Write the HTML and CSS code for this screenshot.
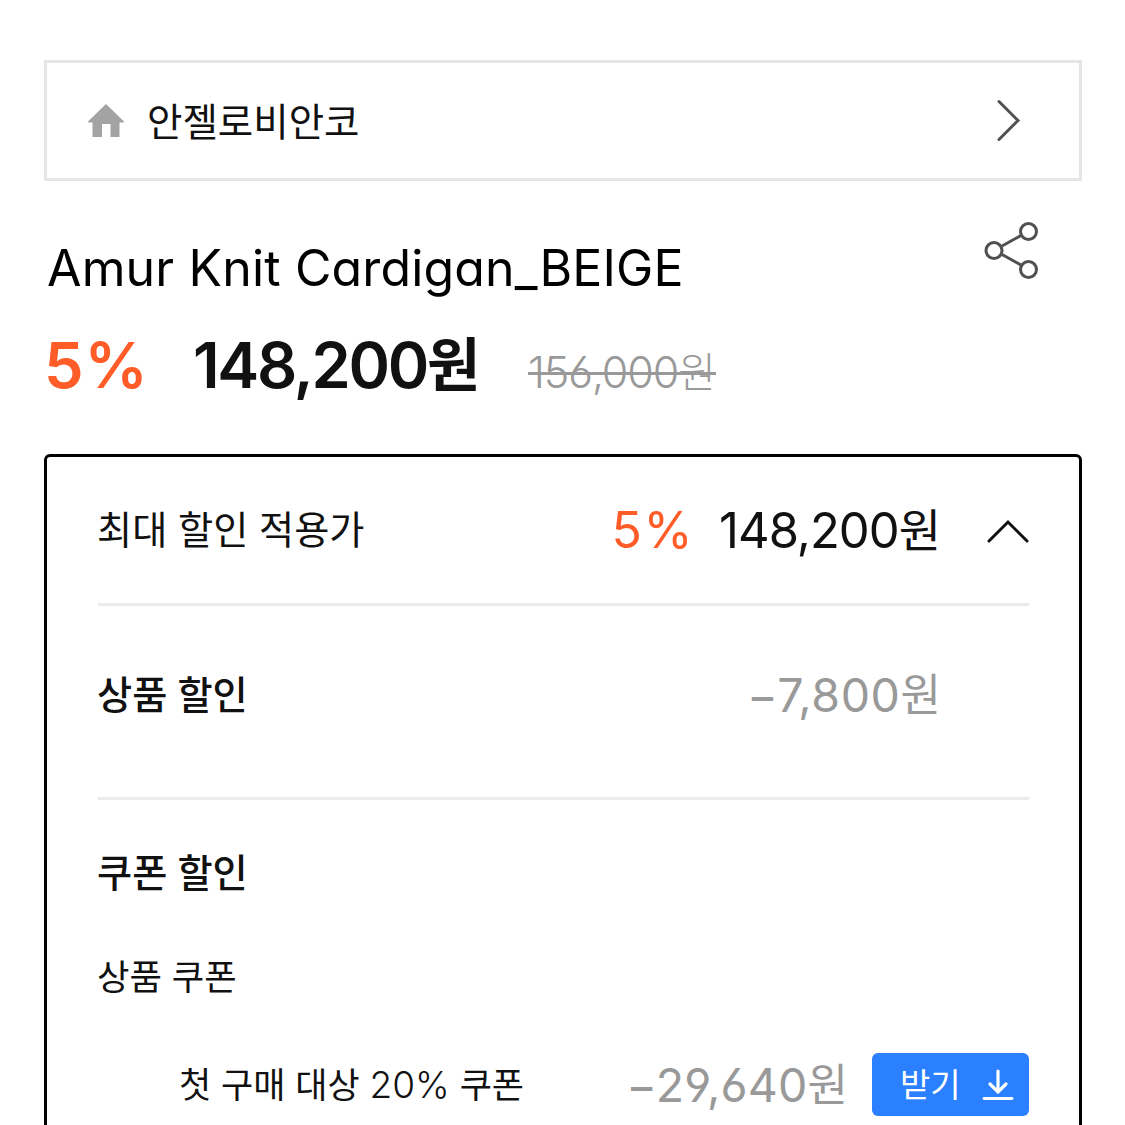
FILE: index.html
```html
<!DOCTYPE html>
<html lang="ko">
    <head>
        <meta charset="utf-8">
        <title>Amur Knit Cardigan_BEIGE</title>
        <link rel="stylesheet" href="styles.css">
    </head>
    <body>
        <a class="brand">
            <svg class="home" width="36" height="34" viewBox="0 0 36 34">
                <path d="M18 0L36 17.500L35.500 18.500H31.500V33H22.500V20H14V33H4.500V18.500H.5L0 17.500Z" fill="#a3a3a3"/>
            </svg>
            <span class="brand_name">안젤로비안코</span>
            <svg class="arrow" width="26" height="44" viewBox="0 0 26 44">
                <path d="M3 2.500L22 21.500L3 40.500" fill="none" stroke="#505050" stroke-width="3" stroke-linecap="round"/>
            </svg>
        </a>

        <div class="title">
            <h1>Amur Knit Cardigan_BEIGE</h1>
            <svg class="share" width="56" height="60" viewBox="0 0 56 60" fill="none" stroke="#505050" stroke-width="3">
                <path d="M18 25L37 14.500M18 33.500L37 44"/>
                <circle cx="10" cy="29.500" r="8"/>
                <circle cx="44.500" cy="10.500" r="8"/>
                <circle cx="44.500" cy="48.500" r="8"/>
            </svg>
        </div>

        <div class="price">
            <b class="rate">5%</b>
            <b class="now">148,200<i>원</i></b>
            <s class="old">156,000<i>원</i></s>
        </div>

        <div class="panel">
            <div class="row best">
                <span class="label">최대 할인 적용가</span>
                <span class="rate">5%</span>
                <span class="amount">148,200<i>원</i></span>
                <svg width="42" height="26" viewBox="0 0 42 26">
                    <path d="M2 24L21 5L40 24" fill="none" stroke="#111" stroke-width="3" stroke-linecap="round"/>
                </svg>
            </div>
            <div class="row product">
                <span class="label">상품 할인</span>
                <span class="minus">−7,800<i>원</i></span>
            </div>
            <div class="coupons">
                <div class="label">쿠폰 할인</div>
                <div class="kind">상품 쿠폰</div>
                <div class="coupon">
                    <span class="coupon_name">첫 구매 대상 <em>20%</em> 쿠폰</span>
                    <span class="minus">−29,640<i>원</i></span>
                    <a class="get">
                        <span>받기</span>
                        <svg width="32" height="32" viewBox="0 0 32 32" fill="none" stroke="#fff" stroke-width="3.200" stroke-linecap="round">
                            <path d="M16 2V22M8 15L16 23L24 15"/>
                            <path d="M2 29.500H30" stroke-width="2.800"/>
                        </svg>
                    </a>
                </div>
            </div>
        </div>
    </body>
</html>
```

FILE: styles.css
```css
*{
    box-sizing: border-box;
}
body{
    height: 1125px;
    margin: 0;
    padding: 60px 43px 0 44px;
    overflow: hidden;
    background-color: #fff;
    color: #111;
    font-family: Inter, "Noto Sans CJK KR", sans-serif;
    /* single-storey a, open 6 and 9 */
    font-feature-settings: "cv11", "cv03", "cv04";
    white-space: nowrap;
}
i, em{
    font-style: normal;
}
i{
    font-family: "Noto Sans CJK KR", sans-serif;
    letter-spacing: 0;
    line-height: 1;
    vertical-align: 1px;
}
svg{
    display: block;
    flex: none;
}
.brand{
    display: flex;
    align-items: center;
    height: 121px;
    padding: 0 57px 0 41px;
    border: 3px solid #e5e5e5;
}
.brand_name{
    flex: 1;
    margin: -4px 0 0 23px;
    font-family: "Noto Sans CJK KR", sans-serif;
    font-size: 38.5px;
    font-weight: 400;
    line-height: 56px;
}
.title{
    display: flex;
    justify-content: space-between;
    align-items: flex-start;
    height: 139px;
    padding: 40px 42px 0 3px;
}
h1{
    margin: 17px 0 0;
    color: #000;
    font-size: 50px;
    font-weight: 400;
    line-height: 60px;
    letter-spacing: .15px;
}
.price{
    display: flex;
    align-items: baseline;
    height: 134px;
    font-size: 63px;
    line-height: 91px;
}
.price b{
    font-weight: 600;
}
.rate{
    color: #ff5c28;
}
.price .rate{
    width: 149px;
    letter-spacing: 1px;
}
.price .now{
    width: 335px;
    letter-spacing: -2.300px;
}
.price .now i{
    font-size: 58px;
    font-weight: 700;
    vertical-align: 2px;
    letter-spacing: 0;
}
.old{
    position: relative;
    color: #999;
    font-size: 43px;
    font-weight: 300;
    letter-spacing: -1.100px;
    text-decoration: none;
}
/* one straight line over both the digits and the smaller 원 */
.old:after{
    content: "";
    position: absolute;
    top: 45px;
    left: 0;
    right: 0;
    height: 3px;
    background-color: #999;
}
.old i{
    font-size: 41px;
    font-weight: 300;
}
.panel{
    height: 700px;
    padding: 0 50px 0 51px;
    border: 3px solid #000;
    border-radius: 6px;
}
.row{
    display: flex;
    align-items: center;
    border-bottom: 3px solid #ebebeb;
}
.best{
    height: 149px;
    font-size: 49px;
}
.best .rate{
    font-size: 50px;
    letter-spacing: 1.5px;
}
.best .amount{
    margin: 0 46px 0 25px;
    letter-spacing: -1px;
}
.best i{
    font-size: 46px;
}
.label{
    flex: 1;
    margin-left: -1px;
    font-size: 38.200px;
    font-weight: 500;
    line-height: 56px;
}
.best .label{
    font-weight: 400;
}
.product{
    height: 194px;
    padding: 0 88px 14px 0;
}
.minus{
    color: #999;
    font-size: 46.500px;
    letter-spacing: .6px;
}
.minus i{
    font-size: 44px;
}
.coupons{
    padding-top: 45px;
}
.kind{
    margin: 51px 0 0 -1px;
    font-size: 35.300px;
    font-weight: 400;
    line-height: 52px;
}
.coupon{
    display: flex;
    align-items: center;
    height: 63px;
    margin-top: 49px;
    padding-left: 81px;
}
.coupon_name{
    flex: 1;
    margin-top: -4px;
    font-size: 35px;
}
.coupon_name em{
    font-size: 37px;
    font-weight: 300;
}
.coupon .minus{
    margin-right: 24px;
    letter-spacing: .2px;
}
.get{
    display: flex;
    justify-content: space-between;
    align-items: center;
    width: 157px;
    height: 63px;
    padding: 0 15px 0 28px;
    border-radius: 6px;
    background-color: #2a80ff;
    color: #fff;
    font-size: 33px;
}
.get span{
    margin-top: -4px;
}
```
